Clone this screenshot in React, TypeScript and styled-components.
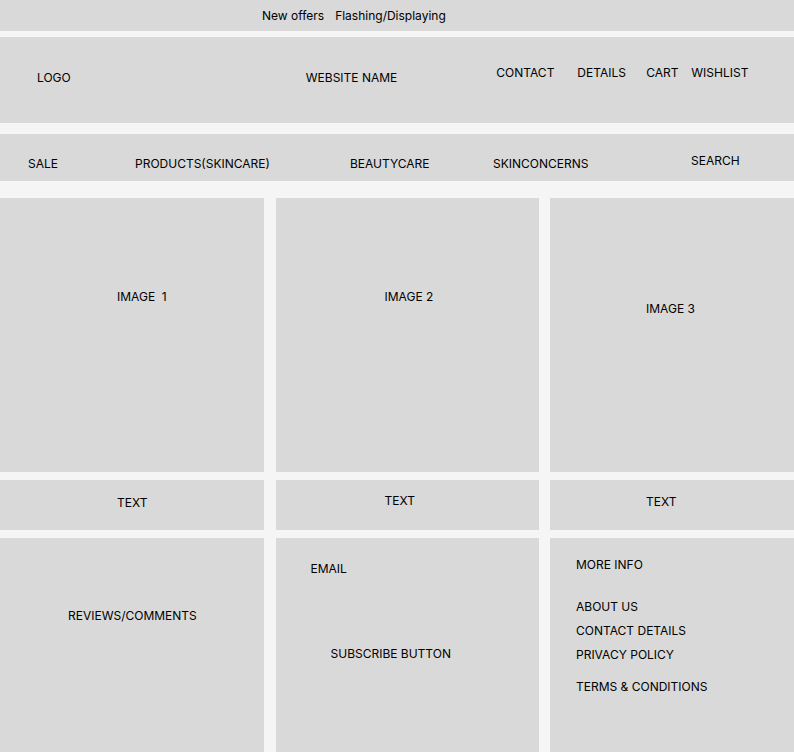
import React from 'react';
import styled, { createGlobalStyle } from 'styled-components';

const GlobalStyle = createGlobalStyle`
	body {
		margin: 0;
		background: #f5f5f5;
		font-family: Inter, "Liberation Sans", sans-serif;
		font-size: 12px;
		line-height: 15px;
		color: #000000;
	}
`;

const Page = styled.div`
	display: flex;
	flex-direction: column;
	width: 794px;
	height: 752px;
	overflow: hidden;
`;

const OfferBar = styled.div`
	display: flex;
	align-items: center;
	gap: 11px;
	height: 31px;
	padding-left: 262px;
	background: #d9d9d9;
`;

const Header = styled.header`
	display: flex;
	align-items: flex-start;
	height: 86px;
	margin-top: 6px;
	padding: 28px 0 0 37px;
	box-sizing: border-box;
	background: #d9d9d9;
`;

const Brand = styled.span<{ $ml: number }>`
	margin-left: ${(p) => p.$ml}px;
	margin-top: 5px;
`;

const HeaderLinks = styled.nav`
	display: flex;
	margin-left: 99px;
`;

const Link = styled.span<{ $w: number }>`
	width: ${(p) => p.$w}px;
	white-space: nowrap;
`;

const NavBar = styled.nav`
	display: flex;
	align-items: flex-start;
	height: 47px;
	margin-top: 11px;
	padding-left: 28px;
	box-sizing: border-box;
	background: #d9d9d9;
`;

const NavItem = styled.span<{ $w: number; $top: number }>`
	width: ${(p) => p.$w}px;
	padding-top: ${(p) => p.$top}px;
	white-space: nowrap;
`;

const Grid = styled.div<{ $h: number; $mt: number }>`
	display: grid;
	grid-template-columns: 264px 263px 244px;
	justify-content: space-between;
	height: ${(p) => p.$h}px;
	margin-top: ${(p) => p.$mt}px;
`;

const Cell = styled.div<{ $pt: number; $pl: number }>`
	display: flex;
	flex-direction: column;
	align-items: flex-start;
	padding: ${(p) => p.$pt}px 0 0 ${(p) => p.$pl}px;
	box-sizing: border-box;
	background: #d9d9d9;
	white-space: pre;
`;

const Label = styled.span<{ $mt?: number; $ml?: number }>`
	margin-top: ${(p) => p.$mt ?? 0}px;
	margin-left: ${(p) => p.$ml ?? 0}px;
`;

export default function App() {
	return (
		<>
			<GlobalStyle />
			<Page>
				<OfferBar>
					<span>New offers</span>
					<span>Flashing/Displaying</span>
				</OfferBar>

				<Header>
					<Brand $ml={0}>LOGO</Brand>
					<Brand $ml={235}>WEBSITE NAME</Brand>
					<HeaderLinks>
						<Link $w={81}>CONTACT</Link>
						<Link $w={69}>DETAILS</Link>
						<Link $w={45}>CART</Link>
						<Link $w={60}>WISHLIST</Link>
					</HeaderLinks>
				</Header>

				<NavBar>
					<NavItem $w={107} $top={22}>SALE</NavItem>
					<NavItem $w={215} $top={22}>PRODUCTS(SKINCARE)</NavItem>
					<NavItem $w={143} $top={22}>BEAUTYCARE</NavItem>
					<NavItem $w={198} $top={22}>SKINCONCERNS</NavItem>
					<NavItem $w={60} $top={19}>SEARCH</NavItem>
				</NavBar>

				<Grid $h={274} $mt={17}>
					<Cell $pt={91} $pl={117}>IMAGE  1</Cell>
					<Cell $pt={91} $pl={109}>IMAGE 2</Cell>
					<Cell $pt={103} $pl={96}>IMAGE 3</Cell>
				</Grid>

				<Grid $h={50} $mt={8}>
					<Cell $pt={15} $pl={117}>TEXT</Cell>
					<Cell $pt={13} $pl={109}>TEXT</Cell>
					<Cell $pt={14} $pl={96}>TEXT</Cell>
				</Grid>

				<Grid $h={214} $mt={8}>
					<Cell $pt={70} $pl={68}>REVIEWS/COMMENTS</Cell>
					<Cell $pt={23} $pl={35}>
						<Label>EMAIL</Label>
						<Label $mt={70} $ml={20}>SUBSCRIBE BUTTON</Label>
					</Cell>
					<Cell $pt={19} $pl={26}>
						<Label>MORE INFO</Label>
						<Label $mt={27}>ABOUT US</Label>
						<Label $mt={9}>CONTACT DETAILS</Label>
						<Label $mt={9}>PRIVACY POLICY</Label>
						<Label $mt={17}>TERMS &amp; CONDITIONS</Label>
					</Cell>
				</Grid>
			</Page>
		</>
	);
}
